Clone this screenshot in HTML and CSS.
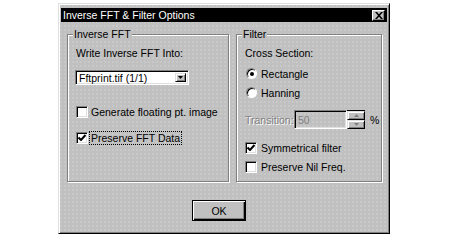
FILE: index.html
```html
<!DOCTYPE html>
<html lang="en">
<head>
    <meta charset="UTF-8">
    <title>Inverse FFT &amp; Filter Options</title>
    <link rel="stylesheet" href="styles.css">
</head>
<body>
    <div class="dialog">
        <div class="titlebar">
            <span>Inverse FFT &amp; Filter Options</span>
            <span class="close">
                <svg width="8" height="7" viewBox="0 0 8 7"><path d="M0 0h2l2 2.3 2-2.3h2l-3 3.5 3 3.5h-2l-2-2.3-2 2.3h-2l3-3.5z" fill="#000"/></svg>
            </span>
        </div>
        <div class="panes">
            <fieldset class="group inverse">
                <legend>Inverse FFT</legend>
                <div class="caption">Write Inverse FFT Into:</div>
                <div class="combo">
                    <span class="combo-value">Fftprint.tif (1/1)</span>
                    <span class="combo-btn"><svg width="5" height="3" viewBox="0 0 5 3"><path d="M0 0h5l-2.5 3z" fill="#000"/></svg></span>
                </div>
                <div class="check gen">
                    <span class="box"></span>
                    <span>Generate floating pt. image</span>
                </div>
                <div class="check keep">
                    <span class="box"><svg width="8" height="7" viewBox="0 0 8 7"><path d="M0.5 3.5l2.5 2.5 4.5-5" fill="none" stroke="#000" stroke-width="2"/></svg></span>
                    <span class="focus">Preserve FFT Data</span>
                </div>
            </fieldset>
            <fieldset class="group filter">
                <legend>Filter</legend>
                <div class="caption">Cross Section:</div>
                <div class="radio first">
                    <span class="dot on"></span>
                    <span>Rectangle</span>
                </div>
                <div class="radio">
                    <span class="dot"></span>
                    <span>Hanning</span>
                </div>
                <div class="transition">
                    <span class="disabled">Transition:</span>
                    <span class="spin-field">50</span>
                    <span class="spin">
                        <span class="spin-btn"><svg width="5" height="3" viewBox="0 0 5 3"><path d="M0 3h5l-2.5-3z" fill="#808080"/></svg></span>
                        <span class="spin-btn"><svg width="5" height="3" viewBox="0 0 5 3"><path d="M0 0h5l-2.5 3z" fill="#808080"/></svg></span>
                    </span>
                    <span class="unit">%</span>
                </div>
                <div class="check sym">
                    <span class="box"><svg width="8" height="7" viewBox="0 0 8 7"><path d="M0.5 3.5l2.5 2.5 4.5-5" fill="none" stroke="#000" stroke-width="2"/></svg></span>
                    <span>Symmetrical filter</span>
                </div>
                <div class="check nil">
                    <span class="box"></span>
                    <span>Preserve Nil Freq.</span>
                </div>
            </fieldset>
        </div>
        <div class="actions">
            <button class="ok">OK</button>
        </div>
    </div>
</body>
</html>
```
FILE: styles.css
```css
body {
    margin: 0;
    background: #ffffff;
    font-family: "Liberation Sans", Arial, sans-serif;
    font-size: 10.5px;
    color: #000000;
}
.dialog {
    box-sizing: border-box;
    width: 332px;
    height: 231px;
    margin: 3px 0 0 58px;
    padding: 4px 2px 0;
    background-color: #c0c0c0;
    background-image: radial-gradient(#cccccc 0.6px, transparent 0.9px);
    background-size: 4px 4px;
    border: 1px solid;
    border-color: #dfdfdf #000 #000 #dfdfdf;
    box-shadow: inset 1px 1px #fff, inset -1px -1px #808080;
}
.titlebar {
    display: flex;
    align-items: center;
    justify-content: space-between;
    height: 14px;
    padding: 0 2px;
    background: #000;
    color: #fff;
}
.close {
    box-sizing: border-box;
    display: flex;
    align-items: center;
    justify-content: center;
    width: 13px;
    height: 11px;
    background: #c0c0c0;
    border: 1px solid;
    border-color: #fff #000 #000 #fff;
    box-shadow: inset -1px -1px #808080;
}
.panes {
    display: flex;
    gap: 7px;
    margin-top: 6px;
    padding-left: 6px;
}
.group {
    box-sizing: border-box;
    display: flex;
    flex-direction: column;
    height: 154px;
    margin: 0;
    padding: 0 0 0 8px;
    border: 1px solid #808080;
    box-shadow: inset 1px 1px #fff, 1px 1px #fff;
}
.group legend {
    margin-left: -3px;
    padding: 0 1px;
    line-height: 13px;
    background: #c0c0c0;
}
.inverse {
    width: 162px;
}
.filter {
    width: 146px;
}
.caption {
    height: 14px;
    line-height: 14px;
    margin-top: 5px;
}
.combo {
    box-sizing: border-box;
    display: flex;
    width: 114px;
    height: 15px;
    margin: 10px 0 0 -1px;
    background: #fff;
    border: 1px solid;
    border-color: #808080 #fff #fff #808080;
    box-shadow: inset 1px 1px #000, inset -1px -1px #dfdfdf;
    padding: 2px 2px 2px 3px;
}
.combo-value {
    flex: 1;
    line-height: 10px;
}
.combo-btn {
    box-sizing: border-box;
    display: flex;
    align-items: center;
    justify-content: center;
    width: 11px;
    background: #c0c0c0;
    border: 1px solid;
    border-color: #dfdfdf #000 #000 #dfdfdf;
    box-shadow: inset 1px 1px #fff, inset -1px -1px #808080;
}
.check, .radio {
    display: flex;
    align-items: center;
    gap: 3px;
    height: 13px;
}
.check.gen {
    margin-top: 20px;
}
.check.keep {
    margin-top: 13px;
}
.box {
    box-sizing: border-box;
    display: flex;
    align-items: center;
    justify-content: center;
    width: 12px;
    height: 12px;
    background: #fff;
    border: 1px solid;
    border-color: #808080 #fff #fff #808080;
    box-shadow: inset 1px 1px #000, inset -1px -1px #dfdfdf;
}
.focus {
    margin-left: -1px;
    padding: 0 1px;
    outline: 1px dotted #000;
}
.filter .check, .filter .radio {
    gap: 4px;
}
.radio.first {
    margin-top: 7px;
}
.radio {
    margin-top: 6px;
}
.dot {
    box-sizing: border-box;
    display: flex;
    align-items: center;
    justify-content: center;
    width: 11px;
    height: 11px;
    margin-left: 1px;
    border-radius: 50%;
    background: #fff;
    border: 1px solid;
    border-color: #808080 #fff #fff #808080;
    box-shadow: inset 1px 1px #000;
}
.dot.on::after {
    content: "";
    width: 4px;
    height: 4px;
    border-radius: 50%;
    background: #000;
}
.transition {
    display: flex;
    align-items: center;
    height: 19px;
    margin-top: 11px;
}
.disabled {
    width: 49px;
    color: #808080;
    text-shadow: 1px 1px #fff;
}
.spin-field {
    box-sizing: border-box;
    width: 53px;
    height: 19px;
    padding: 3px 0 0 3px;
    color: #808080;
    border: 1px solid;
    border-color: #808080 #fff #fff #808080;
    box-shadow: inset 1px 1px #000, inset -1px -1px #dfdfdf;
}
.spin {
    display: flex;
    flex-direction: column;
    width: 18px;
    height: 19px;
    border-top: 1px solid #000;
    box-sizing: border-box;
}
.spin-btn {
    box-sizing: border-box;
    display: flex;
    align-items: center;
    justify-content: center;
    flex: 1;
    background: #c0c0c0;
    border: 1px solid;
    border-color: #dfdfdf #000 #000 #dfdfdf;
    box-shadow: inset 1px 1px #fff, inset -1px -1px #808080;
}
.unit {
    margin-left: 5px;
}
.check.sym {
    margin-top: 12px;
}
.check.nil {
    margin-top: 6px;
}
.actions {
    padding: 18px 0 0 131px;
}
.ok {
    width: 54px;
    height: 21px;
    padding: 0;
    font: inherit;
    background: #c0c0c0;
    border: 1px solid #000;
    box-shadow: inset 1px 1px #fff, inset -1px -1px #000, inset -2px -2px #808080;
}
```
